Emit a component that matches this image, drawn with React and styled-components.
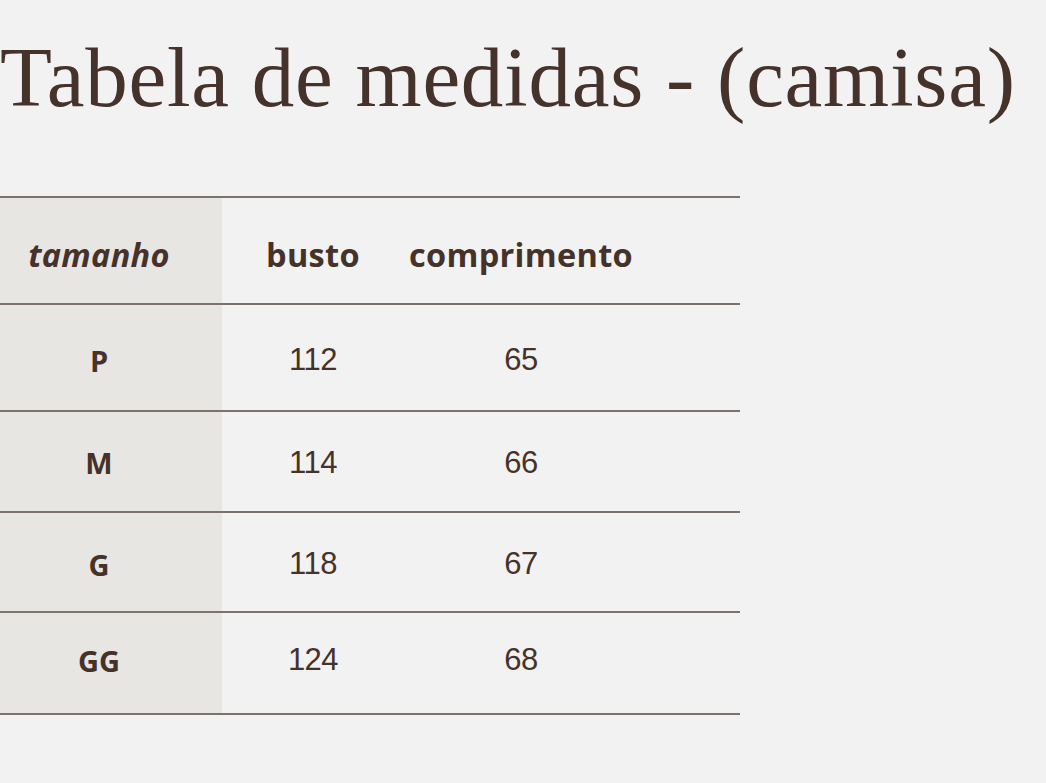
import React from 'react';
import styled, { createGlobalStyle } from 'styled-components';

const GlobalStyle = createGlobalStyle`
  html, body {
    margin: 0;
    padding: 0;
    background: #f2f2f2;
  }
  body {
    width: 1046px;
    height: 783px;
    overflow: hidden;
    font-family: "Liberation Sans", Arial, sans-serif;
    color: #45322a;
  }
`;

const Page = styled.div`
  display: flex;
  flex-direction: column;
  padding-top: 22px;
`;

const Title = styled.h1`
  margin: 0;
  font-family: "Liberation Serif", "Times New Roman", serif;
  font-weight: 400;
  font-size: 85px;
  line-height: 110px;
  letter-spacing: 0.75px;
  color: #45322a;
  white-space: nowrap;
`;

const Table = styled.div`
  margin-top: 64px;
  width: 740px;
  display: grid;
  grid-template-columns: 222px 182px 234px 102px;
  border-top: 2px solid #7d726e;
`;

const Cell = styled.div`
  display: flex;
  align-items: center;
  justify-content: center;
  height: ${p => p.$h}px;
  padding-top: ${p => Math.max(p.$off, 0)}px;
  padding-bottom: ${p => Math.max(-p.$off, 0)}px;
  border-bottom: 2px solid #7d726e;
  background: ${p => (p.$shade ? '#e8e6e3' : 'transparent')};
  padding-right: ${p => (p.$shade ? '24px' : '0')};
  box-sizing: border-box;
`;

const HeadText = styled.span`
  font-family: "Open Sans", "Liberation Sans", sans-serif;
  font-weight: 700;
  font-size: 32.5px;
  font-style: ${p => (p.$italic ? 'italic' : 'normal')};
  letter-spacing: 0.3px;
  color: #45322a;
`;

const SizeText = styled.span`
  font-family: "Open Sans", "Liberation Sans", sans-serif;
  font-weight: 700;
  font-size: 29px;
  color: #45322a;
`;

const Value = styled.span`
  font-family: "Liberation Sans", Arial, sans-serif;
  font-weight: 400;
  font-size: 31px;
  letter-spacing: -0.5px;
  color: #45322a;
`;

const rows = [
  { size: 'P', busto: '112', comp: '65', h: 107, off: 5 },
  { size: 'M', busto: '114', comp: '66', h: 101, off: 2 },
  { size: 'G', busto: '118', comp: '67', h: 100, off: 4 },
  { size: 'GG', busto: '124', comp: '68', h: 102, off: -6 },
];

export default function App() {
  return (
    <>
      <GlobalStyle />
      <Page>
        <Title>Tabela de medidas - (camisa)</Title>
        <Table>
          <Cell $off={8} $shade $h={107}><HeadText $italic>tamanho</HeadText></Cell>
          <Cell $off={8} $h={107}><HeadText>busto</HeadText></Cell>
          <Cell $off={8} $h={107}><HeadText>comprimento</HeadText></Cell>
          <Cell $off={8} $h={107} />
          {rows.map(r => (
            <React.Fragment key={r.size}>
              <Cell $off={r.off} $shade $h={r.h}><SizeText>{r.size}</SizeText></Cell>
              <Cell $off={r.off} $h={r.h}><Value>{r.busto}</Value></Cell>
              <Cell $off={r.off} $h={r.h}><Value>{r.comp}</Value></Cell>
              <Cell $off={r.off} $h={r.h} />
            </React.Fragment>
          ))}
        </Table>
      </Page>
    </>
  );
}
